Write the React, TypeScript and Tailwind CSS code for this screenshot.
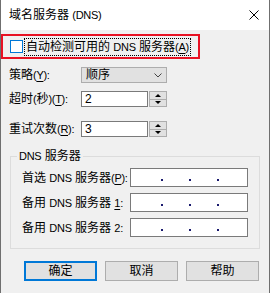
import React from "react";

const font = "font-['Liberation_Sans','Noto_Sans_CJK_SC',sans-serif]";

// latin runs are a bit smaller than the CJK glyphs in the dialog font
const L = ({ children }: { children: React.ReactNode }) => (
    <span className="text-[11px] tracking-[-0.3px]">{children}</span>
);

const Key = ({ children }: { children: React.ReactNode }) => (
    <u className="underline underline-offset-[2px]">{children}</u>
);

const Spinner = () => (
    <div className="flex flex-col w-[18px] h-[16px] ml-[1px]">
        <div className="flex-1 flex items-center justify-center border border-[#adadad] bg-[#e1e1e1]">
            <div className="w-0 h-0 border-l-[3px] border-r-[3px] border-b-[3px] border-l-transparent border-r-transparent border-b-black" />
        </div>
        <div className="flex-1 flex items-center justify-center border border-t-0 border-[#adadad] bg-[#e1e1e1]">
            <div className="w-0 h-0 border-l-[3px] border-r-[3px] border-t-[3px] border-l-transparent border-r-transparent border-t-black" />
        </div>
    </div>
);

const IpBox = () => (
    <div className="w-[118px] h-[19px] border border-[#7a7a7a] bg-white flex items-center">
        <div className="w-[30px]" />
        <span className="w-[2px] h-[2px] bg-[#1a1a6e] mt-[5px]" />
        <div className="w-[26px]" />
        <span className="w-[2px] h-[2px] bg-[#1a1a6e] mt-[5px]" />
        <div className="w-[26px]" />
        <span className="w-[2px] h-[2px] bg-[#1a1a6e] mt-[5px]" />
    </div>
);

const Button = ({ label, primary }: { label: string; primary?: boolean }) => (
    <button
        className={
            primary
                ? "w-[73px] h-[20px] border-2 border-[#0078d7] bg-[#e1e1e1] text-[12px] leading-[16px] flex items-center justify-center"
                : "w-[73px] h-[20px] border border-[#adadad] bg-[#e1e1e1] text-[12px] leading-[16px] flex items-center justify-center"
        }
    >
        {label}
    </button>
);

export default function App() {
    return (
        <div className={`w-[270px] h-[293px] overflow-hidden bg-[#f0f0f0] text-black ${font}`}>
            <div className="h-full border-x border-[#6f6f6f] flex flex-col">
                {/* title bar */}
                <div className="h-[30px] bg-white flex items-center pl-[8px] pr-[10px]">
                    <span className="text-[12px] leading-[16px] flex-1 whitespace-nowrap">
                        域名服务器 <L>(DNS)</L>
                    </span>
                    <svg width="10" height="10" viewBox="0 0 10 10">
                        <path d="M0.5 0.5 L9.5 9.5 M9.5 0.5 L0.5 9.5" stroke="#000" strokeWidth="1" />
                    </svg>
                </div>

                {/* auto detect */}
                <div className="mt-[4px] w-[199px] h-[25px] border-2 border-[#e81123] flex items-center">
                    <div className="ml-[7px] w-[13px] h-[13px] border border-[#0078d7] bg-white" />
                    <span className="ml-[2px] px-[1px] text-[12px] leading-[16px] whitespace-nowrap outline outline-1 outline-dotted outline-black">
                        自动检测可用的 <L>DNS</L> 服务器
                        <L>
                            (<Key>A</Key>)
                        </L>
                    </span>
                </div>

                {/* strategy */}
                <div className="mt-[8px] h-[16px] flex items-center pl-[8px] text-[12px] leading-[16px] whitespace-nowrap">
                    <span className="w-[72px]">
                        策略
                        <L>
                            (<Key>Y</Key>):
                        </L>
                    </span>
                    <div className="w-[86px] h-[16px] border border-[#adadad] bg-[#e1e1e1] flex items-center pl-[4px] pr-[4px]">
                        <span className="flex-1">顺序</span>
                        <svg width="8" height="5" viewBox="0 0 8 5">
                            <path d="M0.5 0.5 L4 4 L7.5 0.5" stroke="#444" fill="none" strokeWidth="1" />
                        </svg>
                    </div>
                </div>

                {/* timeout */}
                <div className="mt-[8px] h-[16px] flex items-center pl-[8px] text-[12px] leading-[16px] whitespace-nowrap">
                    <span className="w-[72px]">
                        超时<L>(</L>秒<L>)(</L>
                        <L>
                            <Key>T</Key>):
                        </L>
                    </span>
                    <div className="w-[67px] h-[16px] border border-[#7a7a7a] bg-white pl-[3px] flex items-center">2</div>
                    <Spinner />
                </div>

                {/* retries */}
                <div className="mt-[14px] h-[16px] flex items-center pl-[8px] text-[12px] leading-[16px] whitespace-nowrap">
                    <span className="w-[72px]">
                        重试次数
                        <L>
                            (<Key>R</Key>):
                        </L>
                    </span>
                    <div className="w-[67px] h-[16px] border border-[#7a7a7a] bg-white pl-[3px] flex items-center">3</div>
                    <Spinner />
                </div>

                {/* group */}
                <fieldset className="mt-[11px] ml-[9px] w-[250px] border border-[#dcdcdc] pb-[11px] text-[12px] leading-[16px] whitespace-nowrap">
                    <legend className="ml-[6px] px-[2px]">
                        <L>DNS</L> 服务器
                    </legend>
                    <div className="mt-[4px] flex flex-col gap-[6px] pl-[11px]">
                        <div className="flex items-center">
                            <span className="w-[108px]">
                                首选 <L>DNS</L> 服务器
                                <L>
                                    (<Key>P</Key>):
                                </L>
                            </span>
                            <IpBox />
                        </div>
                        <div className="flex items-center">
                            <span className="w-[108px]">
                                备用 <L>DNS</L> 服务器{" "}
                                <L>
                                    <Key>1</Key>:
                                </L>
                            </span>
                            <IpBox />
                        </div>
                        <div className="flex items-center">
                            <span className="w-[108px]">
                                备用 <L>DNS</L> 服务器 <L>2:</L>
                            </span>
                            <IpBox />
                        </div>
                    </div>
                </fieldset>

                {/* buttons */}
                <div className="mt-[12px] ml-[23px] flex gap-[8px]">
                    <Button label="确定" primary />
                    <Button label="取消" />
                    <Button label="帮助" />
                </div>
            </div>
        </div>
    );
}
